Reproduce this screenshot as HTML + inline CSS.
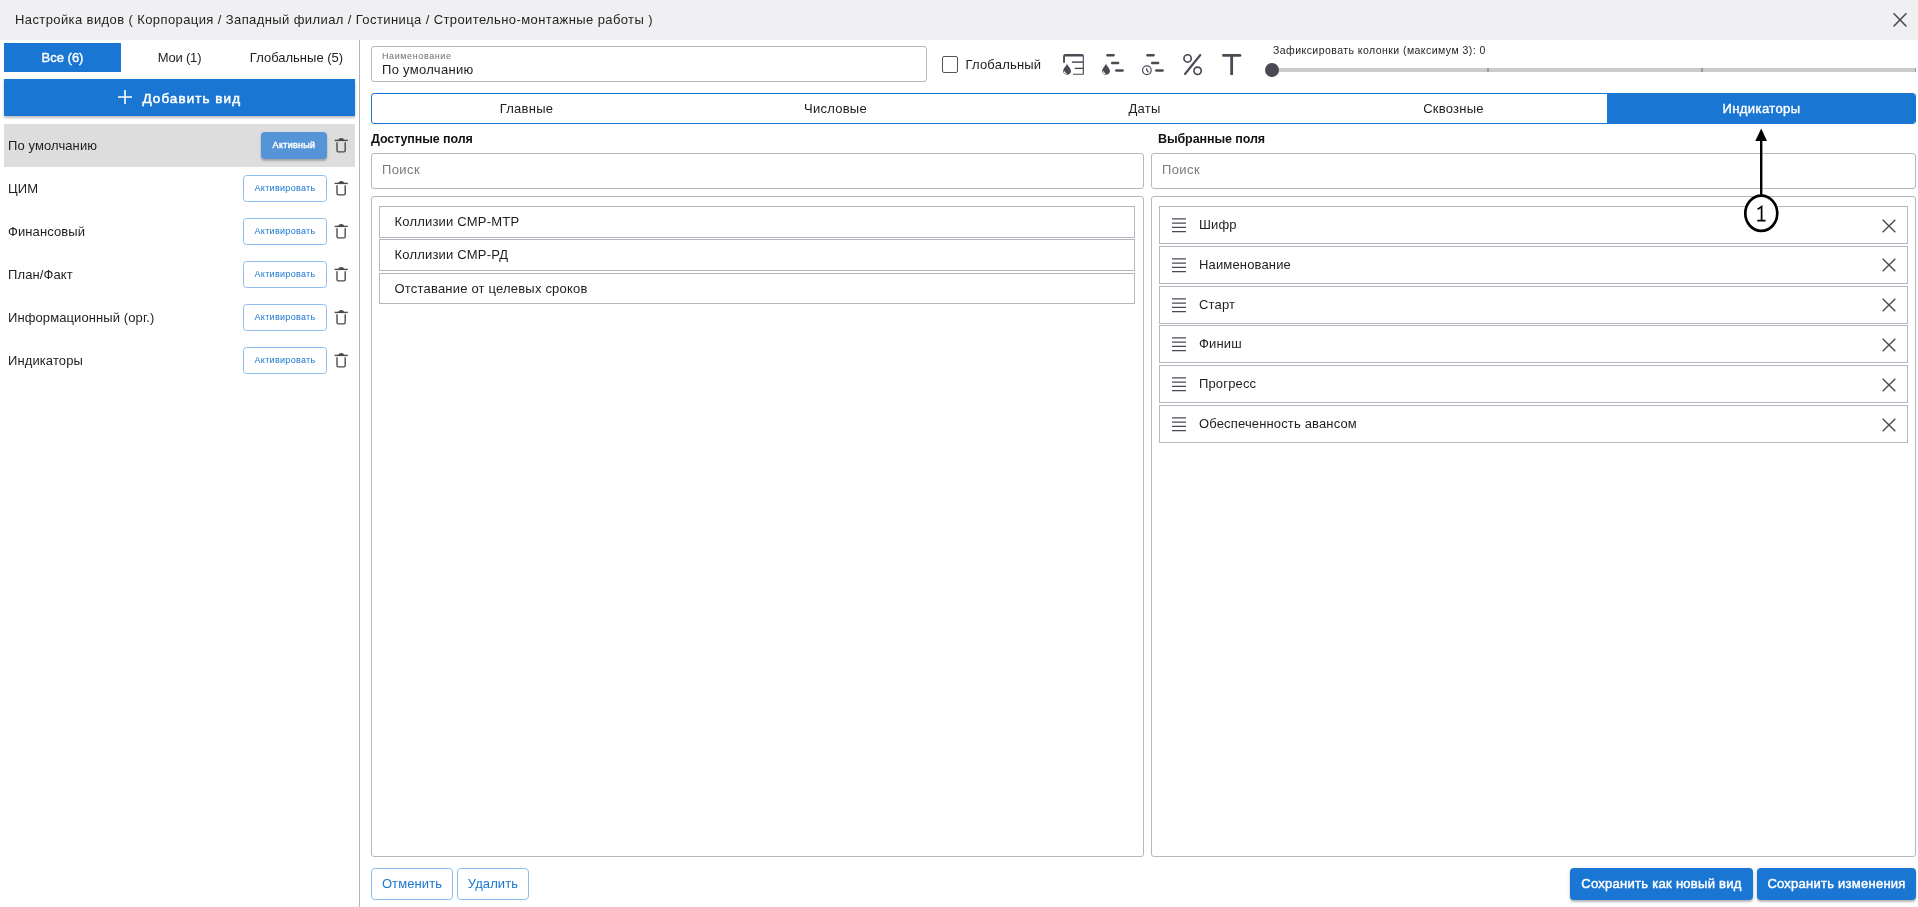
<!DOCTYPE html>
<html lang="ru">
<head>
<meta charset="utf-8">
<style>
*{box-sizing:border-box;margin:0;padding:0}
html,body{width:1918px;height:907px;overflow:hidden;background:#fff;font-family:"Liberation Sans",sans-serif;color:#1e1e1e;font-size:13px}
.a{position:absolute}
.t{position:absolute;white-space:nowrap;line-height:1}
#hdr{left:0;top:0;width:1918px;height:40px;background:#f0f0f2}
.blue{background:#1976d2}
.brd{border:1px solid #b6b6be}
.tab{position:absolute;top:43px;height:29px;display:flex;align-items:center;justify-content:center;white-space:nowrap}
.row{position:absolute;left:4px;width:351px;height:43px}
.rlabel{position:absolute;left:4px;top:0;line-height:43px;white-space:nowrap;letter-spacing:0.1px}
.actbtn{position:absolute;left:239px;top:8px;width:84px;height:27px;border:1px solid #8fbdf0;border-radius:3.5px;color:#1976d2;font-size:9px;padding-bottom:1px;display:flex;align-items:center;justify-content:center;letter-spacing:0.3px}
.trash{position:absolute;left:330px;top:13px}
.ptab{position:absolute;top:0;height:29px;width:309px;display:flex;align-items:center;justify-content:center;letter-spacing:0.25px}
.litem{position:absolute;left:379px;width:756px;height:31px;border:1px solid #b6b6be;padding-left:14.5px;line-height:29px;letter-spacing:0.2px;white-space:nowrap}
.ritem{position:absolute;left:1159px;width:749px;height:38px;border:1px solid #b6b6be;letter-spacing:0.15px;white-space:nowrap}
.ritem .lbl{position:absolute;left:39px;top:0;line-height:36px}
.ritem .drag{position:absolute;left:11px;top:10px}
.ritem .x{position:absolute;left:722px;top:11.5px}
.obtn{position:absolute;top:868px;height:32px;border:1px solid #8fbdf0;border-radius:4px;color:#1976d2;padding-bottom:2px;display:flex;align-items:center;justify-content:center;letter-spacing:0.1px}
.cbtn{position:absolute;top:868px;height:32px;border-radius:4px;background:#1976d2;color:#fff;display:flex;align-items:center;justify-content:center;font-weight:400;-webkit-text-stroke:0.45px #fff;padding-bottom:1px;box-shadow:0 2px 2px rgba(0,0,0,.22),0 1px 4px rgba(0,0,0,.12)}
</style>
</head>
<body>
<div id="root" style="position:absolute;left:0;top:0;width:1918px;height:907px;will-change:transform;background:#fff">
<!-- header -->
<div id="hdr" class="a">
  <div class="t" style="left:15px;top:13px;font-size:13px;letter-spacing:0.40px;color:#1f1f1f">Настройка видов ( Корпорация / Западный филиал / Гостиница / Строительно-монтажные работы )</div>
  <svg class="a" style="left:1892px;top:12px" width="16" height="16" viewBox="0 0 16 16"><path d="M2 1.8L14 14M14 1.8L2 14" stroke="#4a4a52" stroke-width="1.6" stroke-linecap="round"/></svg>
</div>

<!-- left panel -->
<div class="tab blue" style="left:4px;width:117px;color:#fff;-webkit-text-stroke:0.4px #fff;letter-spacing:0px">Все (6)</div>
<div class="tab" style="left:121px;width:117px;letter-spacing:-0.2px">Мои (1)</div>
<div class="tab" style="left:238px;width:117px">Глобальные (5)</div>

<div class="a blue" style="left:4px;top:79px;width:351px;height:37px;box-shadow:0 2px 2px rgba(0,0,0,.2),0 1px 4px rgba(0,0,0,.1)">
  <svg class="a" style="left:114px;top:11px" width="14" height="14" viewBox="0 0 14 14"><path d="M7 0V14M0 7H14" stroke="#fff" stroke-width="1.6"/></svg>
  <div class="t" style="left:138.5px;top:13px;font-size:13.5px;color:#fff;-webkit-text-stroke:0.5px #fff;letter-spacing:1.05px">Добавить вид</div>
</div>

<div class="row" style="top:124px;background:#dddddd">
  <div class="rlabel">По умолчанию</div>
  <div class="a" style="left:257px;top:8px;width:66px;height:27px;border-radius:4px;background:#5595d7;color:#fff;font-size:9px;-webkit-text-stroke:0.4px #fff;letter-spacing:0.3px;padding-bottom:2px;display:flex;align-items:center;justify-content:center;box-shadow:0 2px 2px rgba(0,0,0,.2),0 1px 3px rgba(0,0,0,.1)">Активный</div>
  <svg class="trash" width="14" height="16" viewBox="0 0 14 16"><path d="M0.6 3.4H13.8" stroke="#4a4a52" stroke-width="1.4"/><path d="M4.2 3.2Q4.6 1.1 7.2 1.1Q9.8 1.1 10.3 3.2Z" fill="#4a4a52"/><path d="M3 5.2V13.6Q3 14.9 4.3 14.9H9.9Q11.2 14.9 11.2 13.6V5.2" fill="none" stroke="#4a4a52" stroke-width="1.4"/></svg>
</div>
<div class="row" style="top:167px">
  <div class="rlabel">ЦИМ</div>
  <div class="actbtn">Активировать</div>
  <svg class="trash" width="14" height="16" viewBox="0 0 14 16"><path d="M0.6 3.4H13.8" stroke="#4a4a52" stroke-width="1.4"/><path d="M4.2 3.2Q4.6 1.1 7.2 1.1Q9.8 1.1 10.3 3.2Z" fill="#4a4a52"/><path d="M3 5.2V13.6Q3 14.9 4.3 14.9H9.9Q11.2 14.9 11.2 13.6V5.2" fill="none" stroke="#4a4a52" stroke-width="1.4"/></svg>
</div>
<div class="row" style="top:210px">
  <div class="rlabel">Финансовый</div>
  <div class="actbtn">Активировать</div>
  <svg class="trash" width="14" height="16" viewBox="0 0 14 16"><path d="M0.6 3.4H13.8" stroke="#4a4a52" stroke-width="1.4"/><path d="M4.2 3.2Q4.6 1.1 7.2 1.1Q9.8 1.1 10.3 3.2Z" fill="#4a4a52"/><path d="M3 5.2V13.6Q3 14.9 4.3 14.9H9.9Q11.2 14.9 11.2 13.6V5.2" fill="none" stroke="#4a4a52" stroke-width="1.4"/></svg>
</div>
<div class="row" style="top:253px">
  <div class="rlabel">План/Факт</div>
  <div class="actbtn">Активировать</div>
  <svg class="trash" width="14" height="16" viewBox="0 0 14 16"><path d="M0.6 3.4H13.8" stroke="#4a4a52" stroke-width="1.4"/><path d="M4.2 3.2Q4.6 1.1 7.2 1.1Q9.8 1.1 10.3 3.2Z" fill="#4a4a52"/><path d="M3 5.2V13.6Q3 14.9 4.3 14.9H9.9Q11.2 14.9 11.2 13.6V5.2" fill="none" stroke="#4a4a52" stroke-width="1.4"/></svg>
</div>
<div class="row" style="top:296px">
  <div class="rlabel">Информационный (орг.)</div>
  <div class="actbtn">Активировать</div>
  <svg class="trash" width="14" height="16" viewBox="0 0 14 16"><path d="M0.6 3.4H13.8" stroke="#4a4a52" stroke-width="1.4"/><path d="M4.2 3.2Q4.6 1.1 7.2 1.1Q9.8 1.1 10.3 3.2Z" fill="#4a4a52"/><path d="M3 5.2V13.6Q3 14.9 4.3 14.9H9.9Q11.2 14.9 11.2 13.6V5.2" fill="none" stroke="#4a4a52" stroke-width="1.4"/></svg>
</div>
<div class="row" style="top:339px">
  <div class="rlabel">Индикаторы</div>
  <div class="actbtn">Активировать</div>
  <svg class="trash" width="14" height="16" viewBox="0 0 14 16"><path d="M0.6 3.4H13.8" stroke="#4a4a52" stroke-width="1.4"/><path d="M4.2 3.2Q4.6 1.1 7.2 1.1Q9.8 1.1 10.3 3.2Z" fill="#4a4a52"/><path d="M3 5.2V13.6Q3 14.9 4.3 14.9H9.9Q11.2 14.9 11.2 13.6V5.2" fill="none" stroke="#4a4a52" stroke-width="1.4"/></svg>
</div>

<!-- divider -->
<div class="a" style="left:359px;top:40px;width:1px;height:867px;background:#b4b4bc"></div>

<!-- right panel top row -->
<div class="a brd" style="left:371px;top:46px;width:556px;height:36px;border-radius:3px">
  <div class="t" style="left:10px;top:4.5px;font-size:9px;color:#6e6e6e;letter-spacing:0.6px">Наименование</div>
  <div class="t" style="left:10px;top:16px;font-size:13px;letter-spacing:0.3px">По умолчанию</div>
</div>
<div class="a" style="left:942px;top:56px;width:16px;height:17px;border:1.5px solid #555;border-radius:2px"></div>
<div class="t" style="left:965.5px;top:58px;letter-spacing:0.2px">Глобальный</div>

<!-- icons -->
<svg class="a" style="left:1060px;top:50px" width="190" height="28" viewBox="1060 50 190 28">
  <g fill="#4a4a55">
    <!-- icon1 frame -->
    <path d="M1063.1 62.65V56.2Q1063.1 54 1065.3 54H1082Q1083.9 54 1083.9 55.9V74.85H1073V73.7H1082.75V56.5H1064.95V62.65Z"/>
    <rect x="1071.9" y="61.4" width="11.2" height="1.45"/>
    <rect x="1074.8" y="67.7" width="8.3" height="1.35"/>
    <path d="M1067.05 64C1065.85 66.2 1063.05 69 1063.05 71.1C1063.05 73.2 1064.85 74.75 1067.05 74.75C1069.25 74.75 1071.05 73.2 1071.05 71.1C1071.05 69 1068.25 66.2 1067.05 64Z"/>
    <path d="M1106 64C1104.80 66.2 1102.00 69 1102.00 71.1C1102.00 73.2 1103.80 74.75 1106 74.75C1108.20 74.75 1110.00 73.2 1110.00 71.1C1110.00 69 1107.20 66.2 1106 64Z"/>
  </g>
  <g fill="none" stroke="#4a4a55" stroke-linecap="round">
    <path d="M1107.4 55.3H1113.6M1112.2 62.95H1118.1M1116.3 70.45H1122.6" stroke-width="2.5"/>
    <path d="M1147.4 55.3H1153.6M1152.2 62.95H1158.1M1156.3 70.45H1162.6" stroke-width="2.5"/>
    <circle cx="1146.9" cy="70.25" r="4.3" stroke-width="1.2"/>
    <path d="M1146.8 68.2V70.1L1148.6 72.4" stroke-width="1.3" stroke-linecap="butt"/>
    <circle cx="1187.6" cy="58.4" r="3.65" stroke-width="1.7"/>
    <circle cx="1197.6" cy="70.8" r="3.65" stroke-width="1.7"/>
    <path d="M1200.3 55L1185 74" stroke-width="2.1"/>
    <path d="M1223.4 55.4H1240" stroke-width="2.7"/>
    <path d="M1231.65 56V75" stroke-width="2.8" stroke-linecap="butt"/>
  </g>
  <g fill="none" stroke="#fff" stroke-width="1.2">
    <path d="M1064.15 71.3Q1064.45 73.1 1066.45 73.7"/>
    <path d="M1103.10 71.3Q1103.40 73.1 1105.40 73.7"/>
  </g>
</svg>

<!-- slider -->
<div class="t" style="left:1273px;top:45px;font-size:10.5px;letter-spacing:0.45px;color:#1e1e1e">Зафиксировать колонки (максимум 3): 0</div>
<div class="a" style="left:1272px;top:68px;width:644px;height:4px;background:#cbcbcb;border-radius:1px"></div>
<div class="a" style="left:1487px;top:68px;width:2px;height:4px;background:#9c9c9c"></div>
<div class="a" style="left:1701px;top:68px;width:2px;height:4px;background:#9c9c9c"></div>
<div class="a" style="left:1915px;top:68px;width:1px;height:4px;background:#9c9c9c"></div>
<div class="a" style="left:1265px;top:63px;width:14px;height:14px;border-radius:50%;background:#4a4a55"></div>

<!-- tabs -->
<div class="a" style="left:371px;top:93px;width:1545px;height:31px;border:1px solid #1976d2;border-radius:3px;overflow:hidden">
  <div class="ptab" style="left:0">Главные</div>
  <div class="ptab" style="left:309px">Числовые</div>
  <div class="ptab" style="left:618px">Даты</div>
  <div class="ptab" style="left:927px">Сквозные</div>
  <div class="ptab blue" style="left:1235px;width:309px;color:#fff;-webkit-text-stroke:0.4px #fff;letter-spacing:0.4px">Индикаторы</div>
</div>

<!-- headings -->
<div class="t" style="left:371px;top:133px;font-weight:700;font-size:12.5px;letter-spacing:-0.1px;color:#111">Доступные поля</div>
<div class="t" style="left:1158px;top:133px;font-weight:700;font-size:12.5px;letter-spacing:-0.1px;color:#111">Выбранные поля</div>

<!-- search -->
<div class="a brd" style="left:371px;top:153px;width:773px;height:36px;border-radius:3px">
  <div class="t" style="left:10px;top:9px;color:#7a7a7a;letter-spacing:0.4px">Поиск</div>
</div>
<div class="a brd" style="left:1151px;top:153px;width:765px;height:36px;border-radius:3px">
  <div class="t" style="left:10px;top:9px;color:#7a7a7a;letter-spacing:0.4px">Поиск</div>
</div>

<!-- list boxes -->
<div class="a brd" style="left:371px;top:196px;width:773px;height:661px;border-radius:3px"></div>
<div class="a brd" style="left:1151px;top:196px;width:765px;height:661px;border-radius:3px"></div>

<div class="litem" style="top:206px;height:32px;line-height:30px">Коллизии СМР-МТР</div>
<div class="litem" style="top:239px;height:32px;line-height:30px">Коллизии СМР-РД</div>
<div class="litem" style="top:273px">Отставание от целевых сроков</div>

<div class="ritem" style="top:206px"><svg class="drag" width="16" height="16" viewBox="0 0 16 16"><path d="M1 1.9H15M1 6.1H15M1 10.4H15M1 14.6H15" stroke="#4a4a55" stroke-width="1.3"/></svg><div class="lbl">Шифр</div><svg class="x" width="14" height="14" viewBox="0 0 14 14"><path d="M0.7 0.7L13.3 13.3M13.3 0.7L0.7 13.3" stroke="#4a4a55" stroke-width="1.4"/></svg></div>
<div class="ritem" style="top:245.8px"><svg class="drag" width="16" height="16" viewBox="0 0 16 16"><path d="M1 1.9H15M1 6.1H15M1 10.4H15M1 14.6H15" stroke="#4a4a55" stroke-width="1.3"/></svg><div class="lbl">Наименование</div><svg class="x" width="14" height="14" viewBox="0 0 14 14"><path d="M0.7 0.7L13.3 13.3M13.3 0.7L0.7 13.3" stroke="#4a4a55" stroke-width="1.4"/></svg></div>
<div class="ritem" style="top:285.6px"><svg class="drag" width="16" height="16" viewBox="0 0 16 16"><path d="M1 1.9H15M1 6.1H15M1 10.4H15M1 14.6H15" stroke="#4a4a55" stroke-width="1.3"/></svg><div class="lbl">Старт</div><svg class="x" width="14" height="14" viewBox="0 0 14 14"><path d="M0.7 0.7L13.3 13.3M13.3 0.7L0.7 13.3" stroke="#4a4a55" stroke-width="1.4"/></svg></div>
<div class="ritem" style="top:325.4px"><svg class="drag" width="16" height="16" viewBox="0 0 16 16"><path d="M1 1.9H15M1 6.1H15M1 10.4H15M1 14.6H15" stroke="#4a4a55" stroke-width="1.3"/></svg><div class="lbl">Финиш</div><svg class="x" width="14" height="14" viewBox="0 0 14 14"><path d="M0.7 0.7L13.3 13.3M13.3 0.7L0.7 13.3" stroke="#4a4a55" stroke-width="1.4"/></svg></div>
<div class="ritem" style="top:365.2px"><svg class="drag" width="16" height="16" viewBox="0 0 16 16"><path d="M1 1.9H15M1 6.1H15M1 10.4H15M1 14.6H15" stroke="#4a4a55" stroke-width="1.3"/></svg><div class="lbl">Прогресс</div><svg class="x" width="14" height="14" viewBox="0 0 14 14"><path d="M0.7 0.7L13.3 13.3M13.3 0.7L0.7 13.3" stroke="#4a4a55" stroke-width="1.4"/></svg></div>
<div class="ritem" style="top:405px"><svg class="drag" width="16" height="16" viewBox="0 0 16 16"><path d="M1 1.9H15M1 6.1H15M1 10.4H15M1 14.6H15" stroke="#4a4a55" stroke-width="1.3"/></svg><div class="lbl">Обеспеченность авансом</div><svg class="x" width="14" height="14" viewBox="0 0 14 14"><path d="M0.7 0.7L13.3 13.3M13.3 0.7L0.7 13.3" stroke="#4a4a55" stroke-width="1.4"/></svg></div>

<!-- annotation -->
<svg class="a" style="left:1730px;top:124px" width="60" height="112" viewBox="1730 124 60 112">
  <path d="M1761.2 195V139" stroke="#000" stroke-width="2.4"/>
  <path d="M1755.3 141L1761.2 128.6L1767 141Z" fill="#000"/>
  <ellipse cx="1761.3" cy="213.3" rx="16" ry="17.6" fill="#fff" stroke="#000" stroke-width="2.7"/>
  <path d="M1757.6 209.4L1761.6 206.6V220.6M1757.3 220.6H1765.6" fill="none" stroke="#000" stroke-width="1.7"/>
</svg>

<!-- bottom buttons -->
<div class="obtn" style="left:371px;width:82px">Отменить</div>
<div class="obtn" style="left:457px;width:72px">Удалить</div>
<div class="cbtn" style="left:1570px;width:183px;letter-spacing:0.28px">Сохранить как новый вид</div>
<div class="cbtn" style="left:1757px;width:159px;letter-spacing:0.25px">Сохранить изменения</div>
</div>
</body>
</html>
